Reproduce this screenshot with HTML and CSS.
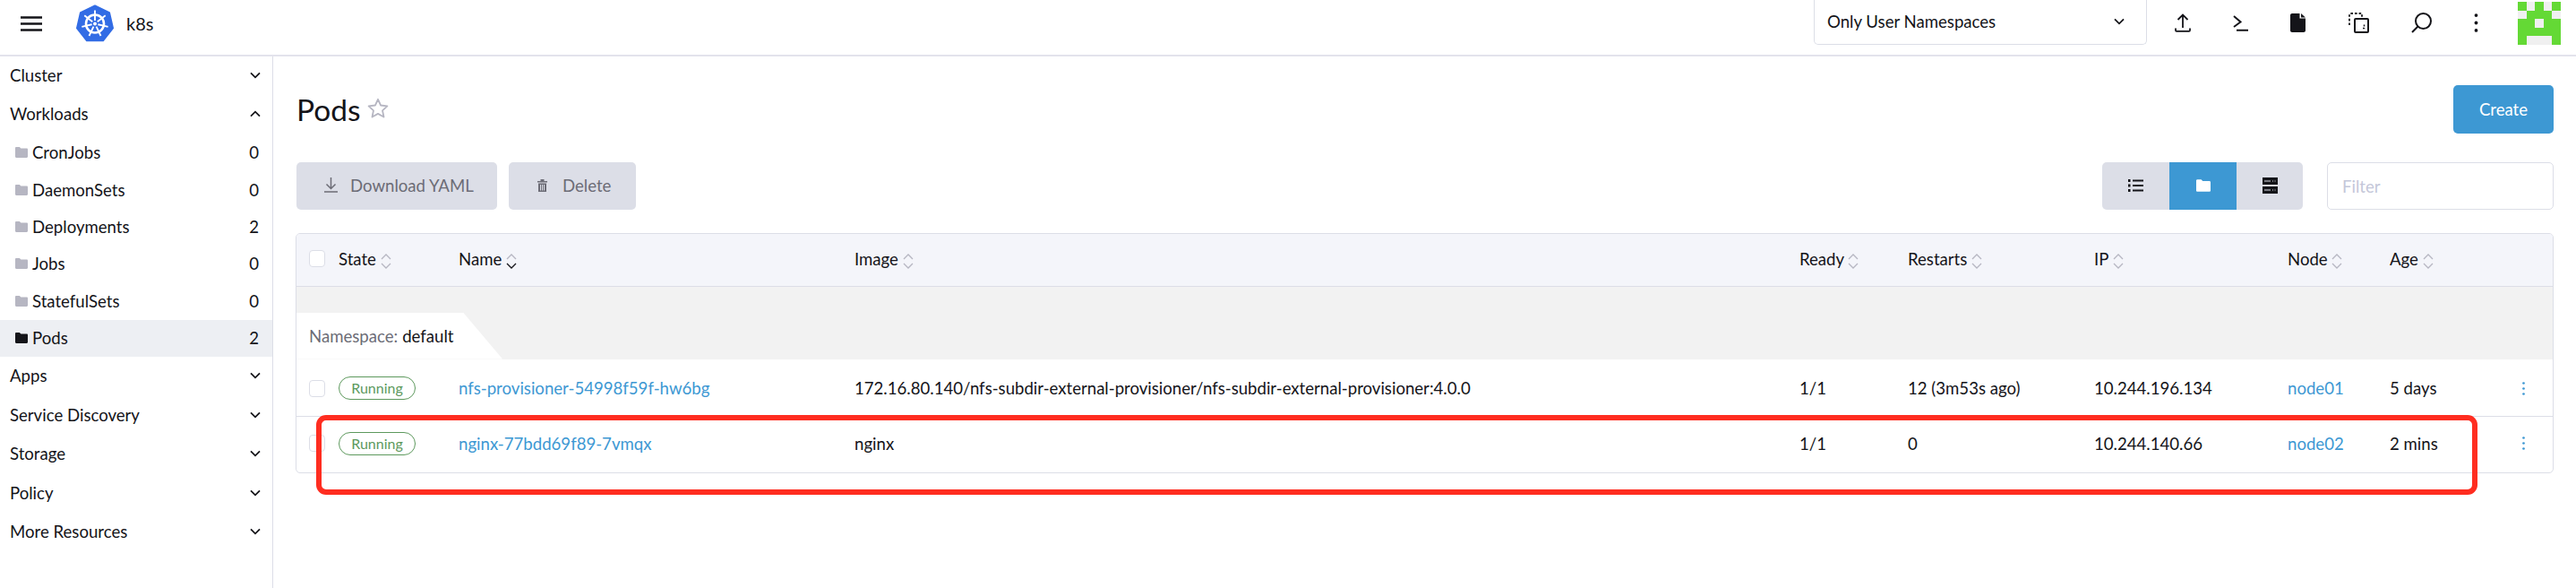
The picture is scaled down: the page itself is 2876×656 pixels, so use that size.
FILE: index.html
```html
<!DOCTYPE html>
<html>
	<head>
		<meta charset="utf-8">
		<title>Pods</title>
		<link rel="stylesheet" href="styles.css">
	</head>
	<body>
		<svg class="sprite" width="0" height="0">
			<symbol id="folder" viewBox="0 0 14 12"><path d="M0 1.2C0 .5.5 0 1.2 0h3.6l1.6 1.6h6.4c.7 0 1.2.5 1.2 1.2v8c0 .7-.5 1.2-1.2 1.2H1.2C.5 12 0 11.500 0 10.800z"/></symbol>
			<symbol id="chev" viewBox="0 0 12 8"><path d="M1 1.300l5 5 5-5" fill="none" stroke="currentColor" stroke-width="1.800"/></symbol>
			<symbol id="caret" viewBox="0 0 12 7"><path d="M1 6l5-5 5 5" fill="none" stroke="currentColor" stroke-width="1.300"/></symbol>
			<symbol id="dots" viewBox="0 0 4 20"><circle cx="2" cy="2" r="1.800" fill="currentColor"/><circle cx="2" cy="10" r="1.800" fill="currentColor"/><circle cx="2" cy="18" r="1.800" fill="currentColor"/></symbol>
		</svg>

		<header class="topbar">
			<button class="menu-btn">
				<svg width="24" height="17" viewBox="0 0 24 17"><path d="M0 1.500h24M0 8.500h24M0 15.500h24" stroke="#141419" stroke-width="2.600"/></svg>
			</button>
			<svg class="logo" width="42" height="42" viewBox="0 0 42 42">
				<path d="M21 1.500l16 7.600 4 17.300-11 13.900H12L1 26.400 5 9.100z" fill="#326ce5" stroke="#326ce5" stroke-width="2" stroke-linejoin="round"/>
				<g stroke="#fff" fill="none">
					<circle cx="21" cy="21.500" r="10" stroke-width="2.600"/>
					<g stroke-width="1.900">
						<path d="M21 18V6.500"/>
						<path d="M21 18V6.500" transform="rotate(51.430 21 21.500)"/>
						<path d="M21 18V6.500" transform="rotate(102.860 21 21.500)"/>
						<path d="M21 18V6.500" transform="rotate(154.290 21 21.500)"/>
						<path d="M21 18V6.500" transform="rotate(205.710 21 21.500)"/>
						<path d="M21 18V6.500" transform="rotate(257.140 21 21.500)"/>
						<path d="M21 18V6.500" transform="rotate(308.570 21 21.500)"/>
					</g>
				</g>
				<circle cx="21" cy="21.500" r="2" fill="#fff"/>
			</svg>
			<span class="cluster-name">k8s</span>

			<div class="ns-select">
				<span>Only User Namespaces</span>
				<svg class="ns-chev" width="12" height="8"><use href="#chev"/></svg>
			</div>

			<div class="tools">
				<svg width="18" height="21" viewBox="0 0 18 21"><path d="M9 16V1.500M3.500 7L9 1.500 14.500 7M1 16.500v2.300c0 .6.400 1 1 1h14c.6 0 1-.4 1-1v-2.300" fill="none" stroke="#141419" stroke-width="1.800"/></svg>
				<svg width="17" height="18" viewBox="0 0 17 18"><path d="M1 1l7.500 6.500L1 13M4 16.800h13" fill="none" stroke="#141419" stroke-width="2"/></svg>
				<svg width="17" height="21" viewBox="0 0 17 21"><path d="M2 0h8.500v5.500H17V19c0 1.100-.9 2-2 2H2c-1.100 0-2-.9-2-2V2C0 .9.900 0 2 0zM12 0l5 4.500h-5z" fill="#141419"/></svg>
				<svg width="23" height="23" viewBox="0 0 23 23"><path d="M1 14V2c0-.6.400-1 1-1h13v5" fill="none" stroke="#141419" stroke-width="1.800" stroke-dasharray="2.600 2"/><rect x="7" y="7" width="15" height="15" rx="1" fill="none" stroke="#141419" stroke-width="2"/><path d="M16 17.500h1.500V13" fill="none" stroke="#141419" stroke-width="1.500" stroke-dasharray="2 1.500"/></svg>
				<svg width="23" height="23" viewBox="0 0 23 23"><circle cx="13.500" cy="9.500" r="8.500" fill="none" stroke="#141419" stroke-width="2"/><path d="M7.500 15.500L1 22" stroke="#141419" stroke-width="2"/></svg>
				<svg class="tool-dots" width="5" height="21"><use href="#dots"/></svg>
			</div>

			<div class="avatar">
				<i></i><b></b><i></i><b></b><i></i>
				<b></b><i></i><i></i><i></i><b></b>
				<i></i><i></i><b></b><i></i><i></i>
				<i></i><i></i><i></i><i></i><i></i>
				<i></i><b></b><b></b><b></b><i></i>
			</div>
		</header>

		<div class="shell">
			<nav class="sidebar">
				<div class="group">Cluster <svg class="chev"><use href="#chev"/></svg></div>
				<div class="group">Workloads <svg class="chev up"><use href="#chev"/></svg></div>
				<a class="item"><svg class="folder"><use href="#folder"/></svg>CronJobs<span class="count">0</span></a>
				<a class="item"><svg class="folder"><use href="#folder"/></svg>DaemonSets<span class="count">0</span></a>
				<a class="item"><svg class="folder"><use href="#folder"/></svg>Deployments<span class="count">2</span></a>
				<a class="item"><svg class="folder"><use href="#folder"/></svg>Jobs<span class="count">0</span></a>
				<a class="item"><svg class="folder"><use href="#folder"/></svg>StatefulSets<span class="count">0</span></a>
				<a class="item active"><svg class="folder"><use href="#folder"/></svg>Pods<span class="count">2</span></a>
				<div class="group">Apps <svg class="chev"><use href="#chev"/></svg></div>
				<div class="group">Service Discovery <svg class="chev"><use href="#chev"/></svg></div>
				<div class="group">Storage <svg class="chev"><use href="#chev"/></svg></div>
				<div class="group">Policy <svg class="chev"><use href="#chev"/></svg></div>
				<div class="group">More Resources <svg class="chev"><use href="#chev"/></svg></div>
			</nav>

			<main class="content">
				<div class="title-row">
					<h1>Pods</h1>
					<svg class="star" width="24" height="23" viewBox="0 0 24 23"><path d="M12 1.800l3.100 6.700 7.300.8-5.400 5 1.500 7.200-6.500-3.600-6.500 3.600 1.500-7.200-5.400-5 7.300-.8z" fill="none" stroke="#b6b6c2" stroke-width="1.800" stroke-linejoin="round"/></svg>
					<button class="create">Create</button>
				</div>

				<div class="action-row">
					<button class="bulk bulk-download">
						<svg width="15" height="17" viewBox="0 0 15 17"><path d="M7.500 0v12M2.500 7.500l5 5 5-5M0 16h15" fill="none" stroke="#6c6c76" stroke-width="1.500"/></svg>
						Download YAML
					</button>
					<button class="bulk bulk-delete">
						<svg width="11" height="14" viewBox="0 0 11 14"><path d="M0 2h11v1.500H0zM3.500 0h4v2h-4zM1 4.500h9V14H1zM3 6v6.500h1V6zM5 6v6.500h1V6zM7 6v6.500h1V6z" fill="#6c6c76" fill-rule="evenodd"/></svg>
						Delete
					</button>
					<div class="toggle">
						<button>
							<svg width="17" height="14" viewBox="0 0 17 14"><path d="M5 1.500h12M5 7h12M5 12.500h12" stroke="#141419" stroke-width="2.200"/><path d="M0 1.500h2.500M0 7h2.500M0 12.500h2.500" stroke="#141419" stroke-width="2.800"/></svg>
						</button>
						<button class="on">
							<svg class="folder-on"><use href="#folder"/></svg>
						</button>
						<button>
							<svg width="17" height="18" viewBox="0 0 17 18"><rect width="17" height="8" fill="#141419"/><rect y="10" width="17" height="8" fill="#141419"/><path d="M2 4h7M2 14h7M11 4h1M13.500 4h1M11 14h1M13.500 14h1" stroke="#dcdee7" stroke-width="1.200"/></svg>
						</button>
					</div>
					<input class="filter" placeholder="Filter">
				</div>

				<div class="table-wrap">
					<table>
						<colgroup>
							<col class="c-check"><col class="c-state"><col class="c-name"><col class="c-image"><col class="c-ready"><col class="c-restarts"><col class="c-ip"><col class="c-node"><col class="c-age"><col>
						</colgroup>
						<thead>
							<tr>
								<th><span class="check head-check"></span></th>
								<th>State <span class="sort"><svg><use href="#caret"/></svg><svg class="flip"><use href="#caret"/></svg></span></th>
								<th>Name <span class="sort current"><svg><use href="#caret"/></svg><svg class="flip"><use href="#caret"/></svg></span></th>
								<th>Image <span class="sort"><svg><use href="#caret"/></svg><svg class="flip"><use href="#caret"/></svg></span></th>
								<th>Ready <span class="sort"><svg><use href="#caret"/></svg><svg class="flip"><use href="#caret"/></svg></span></th>
								<th>Restarts <span class="sort"><svg><use href="#caret"/></svg><svg class="flip"><use href="#caret"/></svg></span></th>
								<th>IP <span class="sort"><svg><use href="#caret"/></svg><svg class="flip"><use href="#caret"/></svg></span></th>
								<th>Node <span class="sort"><svg><use href="#caret"/></svg><svg class="flip"><use href="#caret"/></svg></span></th>
								<th>Age <span class="sort"><svg><use href="#caret"/></svg><svg class="flip"><use href="#caret"/></svg></span></th>
								<th></th>
							</tr>
						</thead>
						<tbody>
							<tr class="ns-row">
								<td colspan="10"><div class="ns-tab"><span class="ns-label">Namespace:</span> default</div></td>
							</tr>
							<tr class="pod pod-first">
								<td><span class="check"></span></td>
								<td><span class="badge">Running</span></td>
								<td><a class="link">nfs-provisioner-54998f59f-hw6bg</a></td>
								<td>172.16.80.140/nfs-subdir-external-provisioner/nfs-subdir-external-provisioner:4.0.0</td>
								<td>1/1</td>
								<td>12 (3m53s ago)</td>
								<td>10.244.196.134</td>
								<td><a class="link">node01</a></td>
								<td>5 days</td>
								<td><svg class="row-dots"><use href="#dots"/></svg></td>
							</tr>
							<tr class="pod pod-last">
								<td><span class="check"></span></td>
								<td><span class="badge">Running</span></td>
								<td><a class="link">nginx-77bdd69f89-7vmqx</a></td>
								<td>nginx</td>
								<td>1/1</td>
								<td>0</td>
								<td>10.244.140.66</td>
								<td><a class="link">node02</a></td>
								<td>2 mins</td>
								<td><svg class="row-dots"><use href="#dots"/></svg></td>
							</tr>
						</tbody>
					</table>
				</div>
			</main>
		</div>

		<div class="annotation"></div>
	</body>
</html>
```

FILE: styles.css
```css
* {
	box-sizing: border-box;
}

html, body {
	height: 100%;
}

body {
	margin: 0;
	display: flex;
	flex-direction: column;
	overflow: hidden;
	position: relative;
	background: #fff;
	color: #141419;
	font-family: Lato, "Open Sans", sans-serif;
	font-size: 18.600px;
}

button, input {
	font: inherit;
}

.sprite {
	position: absolute;
}

/* top bar */
.topbar {
	height: 63px;
	flex: none;
	display: flex;
	align-items: center;
	border-bottom: 2px solid #e3e3ec;
}

.menu-btn {
	margin-left: 23px;
	margin-top: -9px;
	padding: 0;
	display: flex;
	border: 0;
	background: none;
}

.logo {
	margin-left: 38px;
	margin-top: -10px;
}

.cluster-name {
	margin-left: 14px;
	margin-top: -10px;
	font-size: 20px;
}

.ns-select {
	margin-left: auto;
	margin-top: -13px;
	width: 372px;
	height: 51px;
	padding: 0 24px 0 14px;
	display: flex;
	align-items: center;
	justify-content: space-between;
	border: 1px solid #dcdee7;
	border-top: 0;
	border-radius: 0 0 5px 5px;
}

.ns-chev {
	color: #141419;
}

.tools {
	width: 414px;
	margin-top: -10px;
	padding-left: 31px;
	padding-right: 44px;
	display: flex;
	align-items: center;
	justify-content: space-between;
}

.avatar {
	width: 48px;
	height: 48px;
	margin-right: 17px;
	margin-top: -9px;
	display: grid;
	grid-template-columns: repeat(5, 1fr);
	grid-template-rows: repeat(5, 1fr);
}

.avatar i {
	background: #64d935;
}

.avatar b {
	background: #f0f0f0;
}

/* sidebar */
.shell {
	flex: 1;
	display: flex;
	min-height: 0;
}

.sidebar {
	width: 305px;
	flex: none;
	border-right: 1px solid #dcdee7;
}

.group {
	height: 43.500px;
	padding: 0 13px 2px 11px;
	display: flex;
	align-items: center;
	justify-content: space-between;
}

.chev {
	width: 12px;
	height: 8px;
}

.chev.up {
	transform: scaleY(-1);
}

.item {
	height: 41.400px;
	padding: 0 15px 1px 17px;
	display: flex;
	align-items: center;
	color: #141419;
}

.item.active {
	background: #edeff3;
}

.folder {
	width: 14px;
	height: 12px;
	margin-right: 5px;
	fill: #b6b6c2;
}

.item.active .folder {
	fill: #141419;
}

.count {
	margin-left: auto;
}

/* page */
.content {
	flex: 1;
	min-width: 0;
	padding: 32px 25px 0 25px;
}

.title-row {
	height: 54px;
	display: flex;
	align-items: center;
}

h1 {
	margin: 0 7px 0 1px;
	font-size: 33.500px;
	font-weight: 400;
}

.star {
	margin-top: -4px;
}

.create {
	margin-left: auto;
	width: 112px;
	height: 54px;
	border: 0;
	border-radius: 5px;
	background: #3d98d3;
	color: #fff;
}

.action-row {
	height: 53px;
	margin-top: 32px;
	padding-left: 1px;
	display: flex;
}

.bulk {
	height: 53px;
	padding: 0 0 2px;
	display: flex;
	align-items: center;
	border: 0;
	border-radius: 5px;
	background: #dcdee7;
	color: #6c6c76;
}

.bulk-download {
	width: 224px;
	padding-left: 31px;
	gap: 14px;
}

.bulk-delete {
	width: 142px;
	margin-left: 13px;
	padding-left: 32px;
	gap: 17px;
}

.toggle {
	margin-left: auto;
	display: flex;
	border-radius: 5px;
	overflow: hidden;
	background: #dcdee7;
}

.toggle button {
	width: 75px;
	padding: 0 0 2px;
	display: flex;
	align-items: center;
	justify-content: center;
	border: 0;
	background: none;
}

.toggle button:last-child {
	width: 74px;
}

.toggle button.on {
	background: #3d98d3;
}

.folder-on {
	width: 16px;
	height: 14px;
	fill: #fff;
}

.filter {
	width: 253px;
	margin-left: 27px;
	padding: 0 16px;
	border: 1px solid #dcdee7;
	border-radius: 5px;
	outline: 0;
}

.filter::placeholder {
	color: #c4c7d9;
}

/* table */
.table-wrap {
	margin-top: 26px;
	border: 1px solid #dcdee7;
	border-radius: 5px;
	overflow: hidden;
}

table {
	width: 100%;
	border-collapse: collapse;
	table-layout: fixed;
}

.c-check { width: 47px; }
.c-state { width: 134px; }
.c-name { width: 442px; }
.c-image { width: 1055px; }
.c-ready { width: 121px; }
.c-restarts { width: 208px; }
.c-ip { width: 216px; }
.c-node { width: 114px; }
.c-age { width: 133px; }

th {
	height: 58px;
	padding: 0 0 2px;
	text-align: left;
	font-weight: 400;
	background: #f4f5fa;
	border-bottom: 1px solid #dcdee7;
}

td {
	padding: 0;
	white-space: nowrap;
}

.check {
	display: block;
	width: 18px;
	height: 19px;
	margin-left: 14px;
	border: 1px solid #dcdee7;
	border-radius: 4px;
	background: #fff;
}

.sort {
	display: inline-flex;
	flex-direction: column;
	gap: 3px;
	vertical-align: middle;
	color: #b6b6c2;
}

.sort svg {
	display: block;
	width: 12px;
	height: 7px;
}

.sort .flip {
	transform: scaleY(-1);
}

.sort.current .flip {
	color: #141419;
}

.ns-row td {
	height: 81px;
	padding-top: 29px;
	vertical-align: bottom;
	background: #f2f2f2;
}

.ns-tab {
	width: 230px;
	height: 52px;
	padding-left: 14px;
	display: flex;
	align-items: center;
	gap: 5px;
	background: #fff;
	clip-path: polygon(0 0, 186px 0, 230px 100%, 0 100%);
}

.ns-label {
	color: #6c6c76;
}

.pod td {
	vertical-align: middle;
}

.pod-first td {
	height: 64px;
	padding-top: 2px;
	border-bottom: 1px solid #dcdee7;
}

.pod-last td {
	height: 62px;
	padding-bottom: 2px;
}

.badge {
	display: inline-block;
	width: 86px;
	height: 26px;
	line-height: 24px;
	text-align: center;
	font-size: 16px;
	border: 1px solid #5d995d;
	border-radius: 13px;
	color: #5d995d;
}

.link {
	color: #3d98d3;
}

.row-dots {
	display: block;
	width: 3px;
	height: 17px;
	color: #3d98d3;
	margin-left: 15px;
}

/* red box drawn over the screenshot */
.annotation {
	position: absolute;
	left: 353px;
	top: 463px;
	width: 2413px;
	height: 89px;
	border: 6px solid #ff2d20;
	border-radius: 11px;
}
```
